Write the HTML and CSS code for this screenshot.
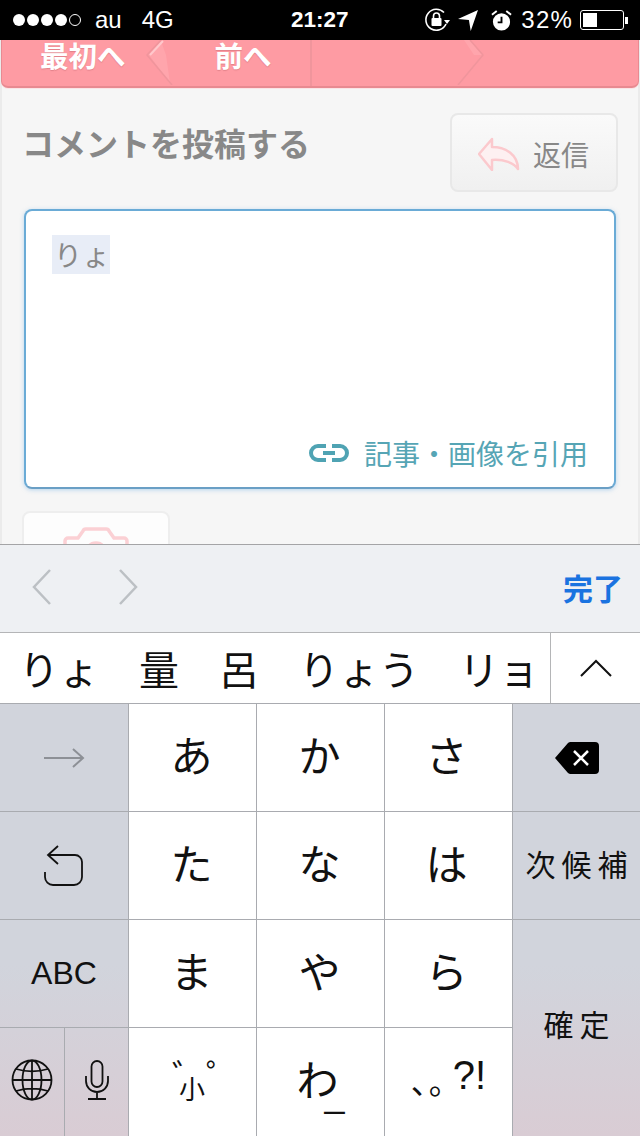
FILE: index.html
```html
<!DOCTYPE html>
<html lang="ja">
<head>
    <meta charset="UTF-8">
    <meta name="viewport" content="width=device-width, initial-scale=1.0">
    <title>コメントを投稿する</title>
    <link rel="stylesheet" href="styles.css">
</head>
<body>
    <div class="status-bar">
        <div class="status-left">
            <div class="signal">
                <span class="dot"></span><span class="dot"></span><span class="dot"></span><span class="dot"></span><span class="dot dot-empty"></span>
            </div>
            <span class="carrier">au</span>
            <span class="network">4G</span>
        </div>
        <div class="status-time">21:27</div>
        <div class="status-right">
            <svg width="26" height="26" viewBox="0 0 26 26">
                <path d="M20 5.500A10.500 10.500 0 1 0 22 17" fill="none" stroke="#fff" stroke-width="1.600"/>
                <path d="M20 13h6l-3 4z" fill="#fff"/>
                <rect x="7.500" y="11" width="10" height="8" rx="1" fill="#fff"/>
                <path d="M9.500 11V9a3 3 0 0 1 6 0v2" fill="none" stroke="#fff" stroke-width="1.600"/>
            </svg>
            <svg class="icon-location" width="20" height="22" viewBox="0 0 22 24">
                <path d="M0 11L22 1 14 24 12 12z" fill="#fff"/>
            </svg>
            <svg class="icon-alarm" width="21" height="23" viewBox="0 0 22 24">
                <circle cx="11" cy="13.500" r="9" fill="#fff"/>
                <path d="M11 8v6h-4" fill="none" stroke="#000" stroke-width="2"/>
                <path d="M1 6l5-4M21 6l-5-4" stroke="#fff" stroke-width="2"/>
            </svg>
            <span class="battery-text">32%</span>
            <div class="battery"><div class="battery-level"></div></div>
            <div class="battery-tip"></div>
        </div>
    </div>

    <div class="page">
        <div class="pager">
            <div class="pager-left">
                <span class="pager-first">最初へ</span>
                <span class="pager-prev">前へ</span>
            </div>
            <svg class="pager-shapes" width="640" height="45" viewBox="0 0 640 45">
                <path d="M149 15L161 1 166 15 170 43z" fill="#ffa5ac"/>
                <path d="M172 45L147 15 161 0" fill="none" stroke="#f0959c" stroke-width="1.500"/>
                <path d="M150 15L163 1" fill="none" stroke="#ffc8cc" stroke-width="2"/>
                <path d="M464 0H470L482 15H474z" fill="#ffa5ac"/>
                <path d="M458 45L483 15 470 0" fill="none" stroke="#f0959c" stroke-width="1.500"/>
            </svg>
        </div>

        <div class="comment">
            <div class="comment-head">
                <h2 class="comment-title">コメントを投稿する</h2>
                <div class="reply-btn">
                    <svg width="42" height="34" viewBox="0 0 42 34">
                        <path d="M1 17L14 2v8c14 0 26 8 26 22-4-6-14-10-26-9v10z" fill="#fdf0f1" stroke="#fbc9cd" stroke-width="2.500" stroke-linejoin="round"/>
                    </svg>
                    <span>返信</span>
                </div>
            </div>

            <div class="comment-box">
                <div><span class="composing">りょ</span></div>
                <div class="quote-link">
                    <svg width="40" height="18" viewBox="0 0 40 18">
                        <path d="M17 2H9a7 7 0 0 0 0 14h8M23 2h8a7 7 0 0 1 0 14h-8M14 9h12" fill="none" stroke="#4fa3b3" stroke-width="4"/>
                    </svg>
                    <span>記事・画像を引用</span>
                </div>
            </div>

            <div class="photo-btn">
                <svg width="66" height="40" viewBox="0 0 66 40">
                    <path d="M2 40V14a3 3 0 0 1 3-3H15l5-7a3 3 0 0 1 3-2H43a3 3 0 0 1 3 2l5 7H61a3 3 0 0 1 3 3V40" fill="none" stroke="#fbd0d4" stroke-width="3.500"/>
                    <circle cx="33" cy="26" r="10" fill="none" stroke="#fbd0d4" stroke-width="3.500"/>
                </svg>
            </div>
        </div>
    </div>

    <div class="keyboard">
        <div class="toolbar">
            <div class="toolbar-arrows">
                <svg width="20" height="36" viewBox="0 0 20 36"><path d="M18 1L2 18l16 17" fill="none" stroke="#bcc0c4" stroke-width="2.500"/></svg>
                <svg width="20" height="36" viewBox="0 0 20 36"><path d="M2 1l16 17L2 35" fill="none" stroke="#bcc0c4" stroke-width="2.500"/></svg>
            </div>
            <span class="done">完了</span>
        </div>

        <div class="candidates">
            <div class="candidate-list">
                <span>りょ</span>
                <span>量</span>
                <span>呂</span>
                <span>りょう</span>
                <span>リョ</span>
            </div>
            <div class="candidate-more">
                <svg width="34" height="18" viewBox="0 0 34 18"><path d="M2 17L17 2l15 15" fill="none" stroke="#111" stroke-width="2"/></svg>
            </div>
        </div>

        <div class="keys">
            <div class="key key-side">
                <svg width="42" height="22" viewBox="0 0 42 22"><path d="M1 11h39M30 2l10 9-10 9" fill="none" stroke="#8d9096" stroke-width="2"/></svg>
            </div>
            <div class="key key-kana">あ</div>
            <div class="key key-kana">か</div>
            <div class="key key-kana key-kana-right">さ</div>
            <div class="key key-side">
                <svg width="46" height="34" viewBox="0 0 46 34">
                    <path d="M1 17L14 2a4 4 0 0 1 3-1h24a4 4 0 0 1 4 4v24a4 4 0 0 1-4 4H17a4 4 0 0 1-3-1z" fill="#000"/>
                    <path d="M20 10l14 14M34 10L20 24" stroke="#fff" stroke-width="2.500"/>
                </svg>
            </div>

            <div class="key key-side">
                <svg width="40" height="42" viewBox="0 0 40 42">
                    <path d="M14 1L4 10l10 9" fill="none" stroke="#111" stroke-width="1.800"/>
                    <path d="M4 10h27a7 7 0 0 1 7 7v15a8 8 0 0 1-8 8H9a8 8 0 0 1-8-8v-5" fill="none" stroke="#111" stroke-width="1.800"/>
                </svg>
            </div>
            <div class="key key-kana">た</div>
            <div class="key key-kana">な</div>
            <div class="key key-kana key-kana-right">は</div>
            <div class="key key-side key-label">次候補</div>

            <div class="key key-side key-abc">ABC</div>
            <div class="key key-kana">ま</div>
            <div class="key key-kana">や</div>
            <div class="key key-kana key-kana-right">ら</div>
            <div class="key key-side key-label key-confirm">確定</div>

            <div class="key-split">
                <div class="key key-side key-lift">
                    <svg width="42" height="42" viewBox="0 0 42 42">
                        <g fill="none" stroke="#111" stroke-width="1.800">
                            <circle cx="21" cy="21" r="19.500"/>
                            <ellipse cx="21" cy="21" rx="9.500" ry="19.500"/>
                            <path d="M21 1.500v39M1.500 21h39M5 10c10 3 22 3 32 0M5 32c10-3 22-3 32 0"/>
                        </g>
                    </svg>
                </div>
                <div class="key key-side key-lift">
                    <svg width="24" height="40" viewBox="0 0 24 40">
                        <g fill="none" stroke="#111" stroke-width="1.800">
                            <rect x="6.500" y="1" width="11" height="26" rx="5.500"/>
                            <path d="M1 16v5a11 11 0 0 0 22 0v-5M12 32v7M3 39h18"/>
                        </g>
                    </svg>
                </div>
            </div>
            <div class="key key-small">
                <span class="mark mark-dakuten">゛</span><span class="small-char">小</span><span class="mark mark-handakuten">゜</span>
            </div>
            <div class="key key-kana key-wa"><span>わ</span><span class="wa-bar">_</span></div>
            <div class="key key-punct"><span class="punct-jp">、。</span>?!</div>
        </div>
    </div>
</body>
</html>
```

FILE: styles.css
```css
* {
    box-sizing: border-box;
}
body {
    margin: 0;
    width: 640px;
    height: 1136px;
    overflow: hidden;
    display: flex;
    flex-direction: column;
    font-family: "Noto Sans CJK JP", "Liberation Sans", sans-serif;
    background-color: #f6f6f6;
}

/* status bar */
.status-bar {
    position: relative;
    z-index: 2;
    height: 40px;
    flex-shrink: 0;
    display: flex;
    align-items: center;
    padding: 0 12px 0 13px;
    background-color: #000;
    color: #fff;
    font-family: "Liberation Sans", sans-serif;
    font-size: 24px;
}
.status-left {
    width: 278px;
    display: flex;
    align-items: center;
}
.signal {
    display: flex;
    gap: 2px;
}
.dot {
    width: 12px;
    height: 12px;
    border-radius: 50%;
    background-color: #fff;
}
.dot-empty {
    background-color: transparent;
    border: 1px solid #fff;
}
.carrier {
    margin-left: 14px;
}
.network {
    margin-left: 20px;
}
.status-time {
    font-weight: bold;
    font-size: 22.500px;
}
.status-right {
    margin-left: auto;
    display: flex;
    align-items: center;
}
.icon-location {
    margin-left: 8px;
}
.icon-alarm {
    margin-left: 13px;
}
.battery-text {
    margin-left: 9px;
    letter-spacing: 1.200px;
}
.battery {
    width: 44px;
    height: 20px;
    margin-left: 7px;
    padding: 2px;
    border: 1px solid #fff;
    border-radius: 3px;
}
.battery-level {
    width: 14px;
    height: 100%;
    background-color: #fff;
}
.battery-tip {
    width: 3px;
    height: 7px;
    margin-left: 1px;
    background-color: #fff;
}

/* page */
.page {
    height: 504px;
    flex-shrink: 0;
    border-left: 2px solid #ebebeb;
    border-right: 2px solid #ebebeb;
    background-color: #f6f6f6;
}
.pager {
    position: relative;
    height: 48px;
    margin: 0 -1px;
    background-color: #fe9ba3;
    border: 1px solid #e88a91;
    border-width: 0 1px 2px;
    border-radius: 0 0 7px 7px;
    box-shadow: 0 1px 0 #fbe4e6;
}
.pager-left {
    position: relative;
    z-index: 1;
    width: 310px;
    height: 100%;
    display: flex;
    align-items: flex-start;
    border-right: 2px solid #f0959c;
    color: #fff;
    font-size: 28.500px;
    font-weight: bold;
    line-height: 30px;
    text-shadow: 0 1px 1px rgba(160, 70, 80, 0.3);
}
.pager-first {
    margin-left: 38px;
}
.pager-prev {
    margin-left: 89px;
}
.pager-shapes {
    position: absolute;
    top: 0;
    left: -2px;
}
.comment {
    padding: 25px 20px 0 22px;
}
.comment-head {
    display: flex;
    justify-content: space-between;
    align-items: flex-start;
}
.comment-title {
    margin: 9px 0 0 -2px;
    color: #888;
    font-size: 32px;
    font-weight: bold;
    line-height: 40px;
}
.reply-btn {
    width: 168px;
    height: 79px;
    display: flex;
    align-items: center;
    gap: 13px;
    padding: 3px 0 0 26px;
    border: 2px solid #e8e8e8;
    border-radius: 8px;
    background: linear-gradient(#fafafa, #f0f0f0);
    color: #888;
    font-size: 28px;
}
.comment-box {
    width: 592px;
    height: 280px;
    margin-top: 17px;
    display: flex;
    flex-direction: column;
    justify-content: space-between;
    padding: 24px 26px 14px;
    border: 2px solid #6aabd6;
    border-bottom-color: #6a9fc5;
    border-radius: 8px;
    background-color: #fff;
    box-shadow: 0 1px 4px rgba(120, 180, 230, 0.5);
}
.composing {
    display: inline-block;
    padding-left: 2px;
    background-color: #e8edf7;
    color: #888;
    font-size: 28px;
    line-height: 39px;
}
.quote-link {
    display: flex;
    align-items: center;
    justify-content: flex-end;
    gap: 15px;
    color: #56a5b5;
    font-size: 28px;
    line-height: 40px;
}
.photo-btn {
    width: 148px;
    height: 90px;
    margin: 22px 0 0 -2px;
    display: flex;
    justify-content: center;
    padding-top: 14px;
    border: 2px solid #eee;
    border-radius: 8px;
    background-color: #fdfdfd;
}

/* keyboard */
.keyboard {
    flex: 1;
    position: relative;
    z-index: 2;
    display: flex;
    flex-direction: column;
    color: #111;
}
.toolbar {
    height: 89px;
    flex-shrink: 0;
    display: flex;
    align-items: center;
    justify-content: space-between;
    padding: 0 17px 3px 32px;
    border-top: 1px solid #a4a4a6;
    border-bottom: 1px solid #b4b5b7;
    background-color: #eef0f3;
}
.toolbar-arrows {
    display: flex;
    gap: 66px;
}
.done {
    color: #1a73e0;
    font-size: 30px;
    font-weight: bold;
}
.candidates {
    height: 70px;
    flex-shrink: 0;
    display: flex;
    background-color: #fff;
}
.candidate-list {
    width: 550px;
    display: flex;
    align-items: center;
    gap: 40px;
    padding-left: 19px;
    font-size: 40px;
    white-space: nowrap;
}
.candidate-more {
    flex: 1;
    display: flex;
    align-items: center;
    justify-content: center;
    border-left: 1px solid #b4b5b7;
}
.keys {
    flex: 1;
    display: grid;
    grid-template-columns: 128px repeat(4, 127px);
    grid-template-rows: 107px 107px 107px 108px;
    gap: 1px;
    padding-top: 1px;
    background-color: #a9abb0;
}
.key {
    display: flex;
    align-items: center;
    justify-content: center;
    background-color: #fff;
    font-size: 40px;
}
.key-kana {
    padding: 0 2px 9px 0;
    font-size: 42px;
}
.key-kana-right {
    padding-right: 4px;
}
.key-side {
    background: linear-gradient(#d1d4dc 0, #d1d4dc 85%, #d9ccd4 100%) fixed;
}
.key-label {
    font-size: 30px;
    letter-spacing: 6px;
    padding: 0 0 6px 6px;
}
.key-abc {
    font-family: "Liberation Sans", sans-serif;
    font-size: 32px;
}
.key-confirm {
    grid-row: span 2;
    padding-bottom: 10px;
}
.key-split {
    display: grid;
    grid-template-columns: 64px 63px;
    gap: 1px;
}
.key-lift {
    padding-bottom: 4px;
}
.key-small {
    justify-content: flex-start;
    padding-left: 43px;
    font-size: 26px;
}
.mark {
    align-self: flex-start;
    margin-top: 30px;
    font-size: 34px;
    line-height: 34px;
}
.mark-dakuten {
    margin-right: -27px;
}
.mark-handakuten {
    margin-left: 1px;
}
.small-char {
    margin-top: 10px;
}
.key-wa {
    padding-right: 0;
}
.wa-bar {
    margin-left: -14px;
    font-size: 36px;
    line-height: 36px;
    font-family: "Liberation Sans", sans-serif;
    align-self: flex-end;
    padding-bottom: 14px;
}
.key-punct {
    padding-bottom: 14px;
    font-family: "Liberation Sans", sans-serif;
}
.punct-jp {
    margin: 10px -10px 0 0;
    font-family: "Noto Sans CJK JP", sans-serif;
    font-size: 32px;
    letter-spacing: 2px;
}
```
